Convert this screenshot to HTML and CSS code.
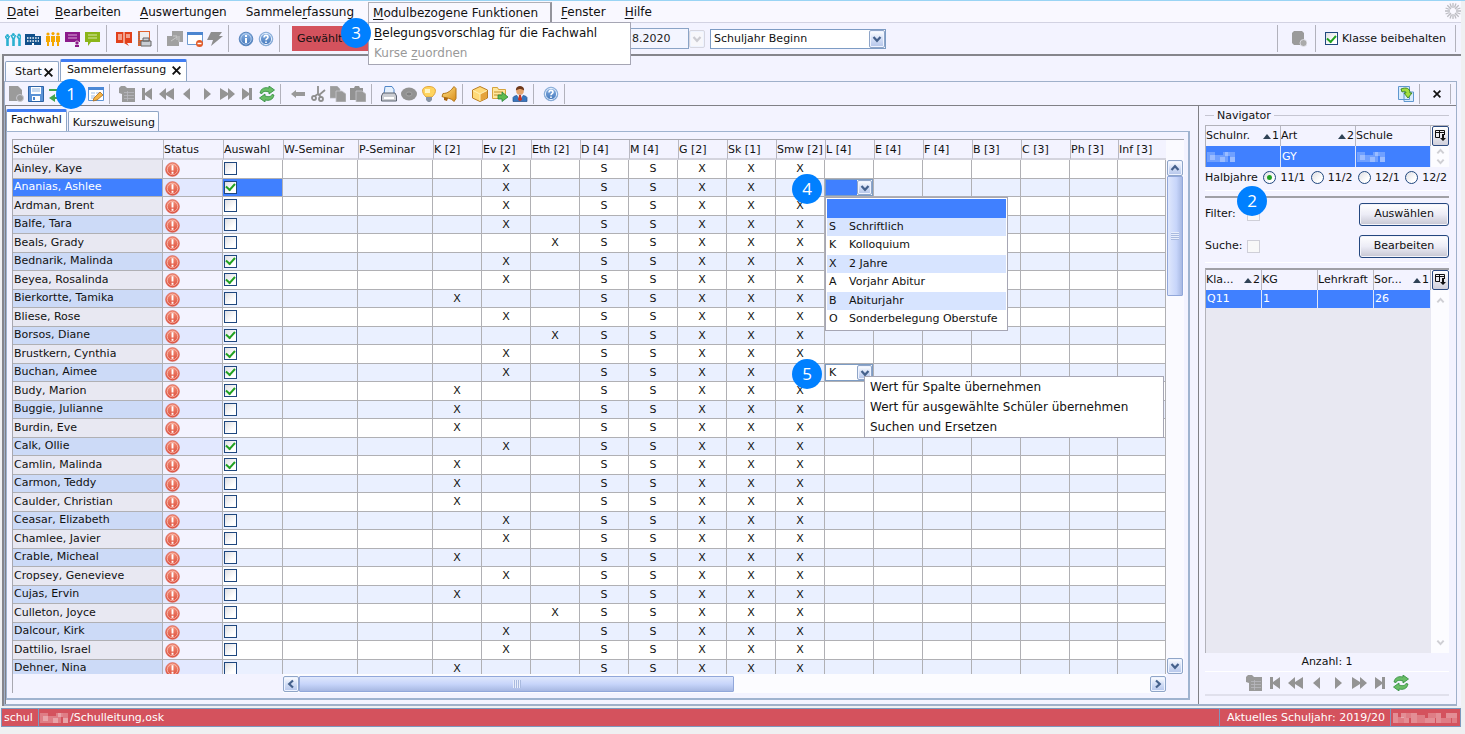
FILE: index.html
```html
<!DOCTYPE html>
<html lang="de">
<head>
<meta charset="utf-8">
<title>Sammelerfassung</title>
<link rel="stylesheet" href="styles.css">
</head>
<body>
<svg class="defs" aria-hidden="true">
  <linearGradient id="g-red" x2="0" y2="1"><stop stop-color="#f3937c"/><stop offset="1" stop-color="#dc4a38"/></linearGradient>
  <linearGradient id="g-blue" x2="0" y2="1"><stop stop-color="#8fb6e6"/><stop offset="1" stop-color="#3d72b8"/></linearGradient>
  <linearGradient id="g-gold" x2="1" y2="1"><stop stop-color="#ffe48a"/><stop offset="1" stop-color="#d98b18"/></linearGradient>
  <symbol id="people" viewBox="0 0 16 16"><g fill="none" stroke="#2bb0d0" stroke-width="1.600"><path d="M0 5l2 3v7M4.500 5L3 8v7M6 4l2 4v7M10.500 4L9 8v7M12 5l2 3v7M16 4l-1 4v7"/></g><g fill="#2bb0d0"><circle cx="2.500" cy="4.500" r="1.500"/><circle cx="8.300" cy="3.500" r="1.500"/><circle cx="14" cy="4" r="1.500"/></g></symbol>
  <symbol id="school" viewBox="0 0 16 16"><path fill="#12508b" d="M0 3h10v2h6v9H0z"/><path stroke="#fff" stroke-width="1.300" stroke-dasharray="1.500 1.200" d="M2 7h12M2 10h12"/><path fill="#fff" d="M7 12h2v2H7z"/></symbol>
  <symbol id="staff" viewBox="0 0 16 16"><g fill="#f5a800"><circle cx="3" cy="3" r="1.600"/><circle cx="8" cy="2.600" r="1.600"/><circle cx="13" cy="3" r="1.600"/><path d="M1 5h4v6H4v4H2v-4H1zM6 5h4v6H9v4H7v-4H6zM11 5h4v6h-1v4h-2v-4h-1z"/></g></symbol>
  <symbol id="board" viewBox="0 0 16 16"><path fill="#8b1a8b" d="M0 1h15v10H0z"/><path stroke="#d8a8d8" d="M3 4h9M3 7h9"/><circle cx="12" cy="12" r="2" fill="#8b1a8b" stroke="#fff" stroke-width=".6"/><path fill="#8b1a8b" d="M10 14h4v2h-4z"/></symbol>
  <symbol id="chat" viewBox="0 0 16 16"><path fill="#8bb51a" d="M0 1h15v10H6l-3 4v-4H0z"/><path stroke="#d8e8a8" d="M3 4h9M3 7h9"/></symbol>
  <symbol id="book" viewBox="0 0 16 16"><path fill="#e2401b" d="M0 1h7l1 1 1-1h7v11h-5l2 3-5-3H0z"/><path stroke="#fff" d="M2 4h4M2 6h4M2 8h4M10 4h4M10 6h4M8 2v10"/></symbol>
  <symbol id="notebook" viewBox="0 0 16 16"><path fill="#df632e" d="M2 0h12v15H2z"/><path fill="#eee" d="M4 1h9v8H4z"/><path stroke="#777" stroke-dasharray="1 1" d="M3 1v14"/><path fill="#c9cdd4" stroke="#666" d="M5 10h10v5H5zM7 7h6v3H7z"/></symbol>
  <symbol id="stack" viewBox="0 0 16 16"><path fill="#a1a1a1" d="M0 5h5V0h11v11h-4v4H0z"/><path stroke="#c8c8c8" fill="none" d="M4 10l6-4M6 5h4v4M12 11V5"/></symbol>
  <symbol id="winred" viewBox="0 0 16 16"><path fill="#fff" stroke="#6d9bd1" d="M.5 1.500h15v12H.5z"/><path fill="#4b85d0" d="M0 1h16v3H0z"/><circle cx="12.500" cy="12.500" r="3.500" fill="#e35a26"/><path stroke="#fff" stroke-width="1.500" d="M10.500 12.500h4"/></symbol>
  <symbol id="bolt" viewBox="0 0 16 16"><path fill="#8e8e8e" d="M4 1h11l-3 4h4L4 15l2-6H0z"/></symbol>
  <symbol id="info" viewBox="0 0 16 16"><circle cx="8" cy="8" r="6.800" fill="url(#g-blue)" stroke="#5b87be"/><circle cx="8" cy="8" r="5.200" fill="none" stroke="#cfe0f6" stroke-width=".7"/><path fill="#fff" d="M7 4h2v2H7zM7 7h2v5H7z"/></symbol>
  <symbol id="help" viewBox="0 0 16 16"><circle cx="8" cy="8" r="6.800" fill="url(#g-blue)" stroke="#8baed8"/><circle cx="8" cy="8" r="5.600" fill="none" stroke="#e5effc"/><path fill="none" stroke="#fff" stroke-width="1.600" d="M6 6.500c0-3 4-2.500 4-.3C10 7.600 8 7.600 8 9.300M8 10.500v1.500"/></symbol>
  <symbol id="dbgray" viewBox="0 0 16 16"><path fill="#9b9b9b" d="M1 2l2-2h8l2 2v8l-2 4H3l-2-2z"/><circle cx="12.500" cy="12" r="3.500" fill="#aaa" stroke="#ededf5" stroke-width=".7"/></symbol>
  <symbol id="docgray" viewBox="0 0 16 16"><path fill="#9b9b9b" d="M1 0h9l4 4v11H1z"/><circle cx="12" cy="12" r="3.500" fill="#999" stroke="#c9c9d0"/></symbol>
  <symbol id="save" viewBox="0 0 16 16"><path fill="#5b93d6" stroke="#2c62a5" d="M.5.5h15v15H.5z"/><path fill="#fff" d="M3 1h10v7H3zM4 10h8v5H4z"/><path stroke="#8db2df" d="M4 3h8M4 5h8"/><path fill="#4a86cc" d="M5 11h2v3H5z"/></symbol>
  <symbol id="swap" viewBox="0 0 16 16"><path fill="#42a64c" d="M1 3h9V0l6 4-6 4V5H1zM15 11H7V8l-6 4 6 4v-3h8z"/></symbol>
  <symbol id="edit" viewBox="0 0 16 16"><path fill="#fff" stroke="#5d95d6" d="M.5 1.500h15v13H.5z"/><path fill="#4b88d6" d="M0 1h16v3H0z"/><path stroke="#9dbde5" d="M3 7h4M8 7h5M3 10h4M3 12h3"/><path fill="#f5b544" stroke="#a9691d" stroke-width=".8" d="M6 12l6-6 3 3-6 5-4 1z"/></symbol>
  <symbol id="table" viewBox="0 0 16 16"><path fill="#9a9a9a" d="M0 2l2-2h4l2 2h8v14H3V8L0 7z"/><path stroke="#b9b9bf" stroke-width=".8" fill="none" d="M5 6.500h10M5 9.500h10M5 12.500h10M8.500 5v10"/></symbol>
  <symbol id="first" viewBox="0 0 16 16"><path fill="#949494" d="M3 2h3v5l7-5v12L6 9v5H3z"/></symbol>
  <symbol id="last" viewBox="0 0 16 16"><path fill="#949494" d="M13 2h-3v5L3 2v12l7-5v5h3z"/></symbol>
  <symbol id="rew" viewBox="0 0 16 16"><path fill="#949494" d="M0 8l7-6v5l8-5v12L7 9v5z"/></symbol>
  <symbol id="fwd" viewBox="0 0 16 16"><path fill="#949494" d="M16 8L9 2v5L1 2v12l8-5v5z"/></symbol>
  <symbol id="prev" viewBox="0 0 16 16"><path fill="#949494" d="M4 8l7-6v12z"/></symbol>
  <symbol id="next" viewBox="0 0 16 16"><path fill="#949494" d="M12 8L5 2v12z"/></symbol>
  <symbol id="refresh" viewBox="0 0 16 16"><g fill="#69bd67" stroke="#2f8a3c" stroke-width=".8"><path d="M1 7c1-5 5-6 9-5V0l5.500 4L10 8V6C7 5 4 5 3 7.500z"/><path d="M15 9c-1 5-5 6-9 5v2L.500 12 6 8v2c3 1 6 1 7-1.500z"/></g></symbol>
  <symbol id="back" viewBox="0 0 16 16"><path fill="#999" d="M1 8l5-4v2h9v4H6v2z"/></symbol>
  <symbol id="cut" viewBox="0 0 16 16"><g fill="none" stroke="#8f8f8f" stroke-width="1.800"><path d="M8 0v8l-3 2M15 4L9 9l2 2"/><circle cx="4" cy="12" r="2"/><circle cx="11" cy="13" r="2"/></g></symbol>
  <symbol id="copy" viewBox="0 0 16 16"><path fill="#9c9c9c" stroke="#b9b9be" stroke-width=".7" d="M0 0h7l3 3v9H0z"/><path fill="#999" stroke="#c6c6cc" stroke-width=".8" d="M6 5h6l4 3v8H6z"/></symbol>
  <symbol id="paste" viewBox="0 0 16 16"><path fill="#929292" d="M0 2h4l1-2h4l1 2h3v12H0z"/><path fill="#999" stroke="#c6c6cc" stroke-width=".8" d="M6 5h6l4 3v8H6z"/></symbol>
  <symbol id="print" viewBox="0 0 16 16"><path fill="#e6f0fc" stroke="#5186c8" d="M4 .5h7l2 3V8H3z"/><path fill="#cbcdd2" stroke="#5b6270" d="M2 7h12l1.500 3v5H.5v-5z"/><path fill="#fff" d="M3 11h10v2H3z"/></symbol>
  <symbol id="disc" viewBox="0 0 16 16"><ellipse cx="8" cy="8" rx="8" ry="6.500" fill="#929292"/><ellipse cx="8" cy="8" rx="3" ry="2" fill="#808080" stroke="#a5a5a5"/></symbol>
  <symbol id="bulb" viewBox="0 0 16 16"><path fill="#ffd45e" stroke="#e2a63b" d="M8 .5c8 0 8 6 3 10.500H5C0 6.500 0 .5 8 .5z"/><path fill="#fff4c4" d="M4 3h5v4H4z"/><path fill="#8995a5" d="M5 11h6v3l-2 2H7l-2-2z"/></symbol>
  <symbol id="bell" viewBox="0 0 16 16"><path fill="url(#g-gold)" stroke="#b27415" d="M13 .5l2 2v10l-2 3c-3-4-8-3-12-5l1-3c5 0 8-3 11-7z"/><path fill="#a8640f" d="M3 11l4 1-1 3-3-1z"/></symbol>
  <symbol id="box" viewBox="0 0 16 16"><path fill="#ffda79" stroke="#b97c22" d="M8 .5L15.500 4v8L8 15.500.500 12V4z"/><path fill="#e5a33a" d="M8 8l7-3.500V12l-7 3z"/><path fill="none" stroke="#fff1b5" d="M1 4.500L8 8l7-3.500M8 8v7"/></symbol>
  <symbol id="folder" viewBox="0 0 16 16"><path fill="#ffe79d" stroke="#d5a33c" d="M.5 1.500h5l1 2h7v9H.5z"/><path stroke="#c18e2a" d="M2 6h9M2 9h7"/><path fill="#5dbb4d" stroke="#26833a" stroke-width=".8" d="M6 9h4V6l6 5-6 4.500V13H6z"/></symbol>
  <symbol id="user" viewBox="0 0 16 16"><circle cx="8" cy="5" r="3.800" fill="#e5a36c"/><path fill="#70391b" d="M4 4.500c-1-6 9-6 8 0-3-2-5-2-8 0z"/><path fill="#3877bf" stroke="#24508b" stroke-width=".7" d="M1 15.500v-4c1-3 13-3 14 0v4z"/><path fill="#fff" d="M5 9h6l-3 5z"/><path fill="#c83424" d="M7 9h2l1 5-2 1-2-1z"/></symbol>
  <symbol id="undock" viewBox="0 0 16 16"><path fill="#d9ebfb" stroke="#5f97cf" d="M.5.5h11v13H.5zM6 6h9.500v9.500H6z"/><path fill="#a4df3f" stroke="#38821c" stroke-width=".9" d="M3 3c5-2 9-1 9 4h2l-4 5-4-5h2c0-2-2-2-4-1z"/></symbol>
  <symbol id="alert" viewBox="0 0 16 16"><circle cx="8" cy="8" r="7.300" fill="url(#g-red)" stroke="#d95745" stroke-width=".8"/><circle cx="8" cy="8" r="5.600" fill="none" stroke="#f9c4b9" stroke-width=".8"/><path fill="#fff" d="M7 3.500h2V9H7zM7 10.500h2v2H7z"/></symbol>
  <symbol id="down" viewBox="0 0 10 10"><path fill="none" stroke="currentColor" stroke-width="2.200" d="M1.500 3L5 6.800 8.500 3"/></symbol>
  <symbol id="up" viewBox="0 0 10 10"><path fill="none" stroke="currentColor" stroke-width="2.200" d="M1.500 7L5 3.200 8.500 7"/></symbol>
  <symbol id="left" viewBox="0 0 10 10"><path fill="none" stroke="currentColor" stroke-width="2.200" d="M7 1.500L3.200 5 7 8.500"/></symbol>
  <symbol id="right" viewBox="0 0 10 10"><path fill="none" stroke="currentColor" stroke-width="2.200" d="M3 1.500L6.800 5 3 8.500"/></symbol>
  <symbol id="close" viewBox="0 0 8 8"><path stroke="#111" stroke-width="1.700" d="M.6.6l6.800 6.800M7.400.6L.6 7.400"/></symbol>
  <symbol id="sort" viewBox="0 0 8 5"><path fill="#2f4256" d="M4 0l4 5H0z"/></symbol>
  <symbol id="cols" viewBox="0 0 11 12"><path fill="none" stroke="#111" d="M5 7.500H.5v-7h9V5M.5 2.500h9M4.500.5v7"/><path fill="#111" d="M7 4h2v4h2l-3 3-3-3h2z"/></symbol>
  <symbol id="spin" viewBox="0 0 16 16"><g stroke="#bcbcc2" stroke-width="1.300"><path d="M8 0v5M8 11v5M0 8h5M11 8h5M2.300 2.300L6 6M10 10l3.700 3.700M2.300 13.700L6 10M10 6l3.700-3.700M5 .6l1.500 4M9.500 11.400l1.500 4M11 .6L9.500 4.600M6.500 11.400L5 15.400M.6 5l4 1.500M11.400 9.500l4 1.500M.6 11l4-1.500M11.400 6.500l4-1.500"/></g></symbol>
  <symbol id="pixels" viewBox="0 0 30 10" preserveAspectRatio="none"><path fill="#fff" fill-opacity=".25" d="M0 0h8v10H0zM8 3h8v7H8zM16 0h5v10h-5zM23 0h5v10h-5z"/><path fill="#fff" fill-opacity=".3" d="M3 3h5v5H3zM13 5h5v5h-5zM18 0h5v4h-5zM23 5h5v5h-5z"/></symbol>
  <symbol id="pixels-wide" viewBox="0 0 64 10"><path fill="#fff" fill-opacity=".35" d="M0 0h5v10H0zM8 0h5v5H8zM11 5h5v5h-5zM18 0h6v10h-6zM32 5h10v5H32zM43 0h5v10h-5zM53 0h11v5H53z"/><path fill="#fff" fill-opacity=".25" d="M5 4h6v6H5zM13 0h5v5h-5zM24 2h8v8h-8zM35 0h8v5h-8zM48 5h10v5H48zM59 5h5v5h-5z"/></symbol>
</svg>

<div class="window">
  <nav class="menubar" aria-label="Hauptmenü">
    <button class="first"><u>D</u>atei</button>
    <button><u>B</u>earbeiten</button>
    <button><u>A</u>uswertungen</button>
    <button>Sammele<u>r</u>fassung</button>
    <div class="menu-open">
      <button class="active"><u>M</u>odulbezogene Funktionen</button>
      <div class="popup main-popup" role="menu">
        <button role="menuitem"><u>B</u>elegungsvorschlag für die Fachwahl</button>
        <button role="menuitem" disabled>Kurse <u>z</u>uordnen</button>
        <span class="badge badge-3">3</span>
      </div>
    </div>
    <button><u>F</u>enster</button>
    <button><u>H</u>ilfe</button>
    <svg class="spinner"><use href="#spin"/></svg>
  </nav>

  <div class="toolbar top-tools">
    <button class="tool" aria-label="Schüler"><svg><use href="#people"/></svg></button>
    <button class="tool" aria-label="Schule"><svg><use href="#school"/></svg></button>
    <button class="tool" aria-label="Lehrer"><svg><use href="#staff"/></svg></button>
    <button class="tool" aria-label="Unterricht"><svg><use href="#board"/></svg></button>
    <button class="tool" aria-label="Nachrichten"><svg><use href="#chat"/></svg></button>
    <i class="sep"></i>
    <button class="tool" aria-label="Klassen"><svg><use href="#book"/></svg></button>
    <button class="tool" aria-label="Berichte"><svg><use href="#notebook"/></svg></button>
    <i class="sep"></i>
    <button class="tool" aria-label="Fenster anordnen"><svg><use href="#stack"/></svg></button>
    <button class="tool" aria-label="Fenster schließen"><svg><use href="#winred"/></svg></button>
    <button class="tool" aria-label="Ausführen"><svg><use href="#bolt"/></svg></button>
    <i class="sep"></i>
    <button class="tool" aria-label="Info"><svg><use href="#info"/></svg></button>
    <button class="tool" aria-label="Hilfe"><svg><use href="#help"/></svg></button>
    <i class="sep"></i>
    <label class="year-label" for="datum">Gewählte</label>
    <input class="date" id="datum" value="8.2020">
    <span class="arrow off"><svg><use href="#down"/></svg></span>
    <span class="combo year"><select aria-label="Zeitpunkt"><option>Schuljahr Beginn</option></select><span class="arrow"><svg><use href="#down"/></svg></span></span>
    <span class="grow"></span>
    <i class="sep"></i>
    <button class="tool db" aria-label="Datenbank"><svg><use href="#dbgray"/></svg></button>
    <i class="sep"></i>
    <label class="keep"><input type="checkbox" class="check" checked>Klasse beibehalten</label>
    <i class="sep end"></i>
  </div>

  <main class="workspace">
    <div class="tabs">
      <button class="tab">Start<svg><use href="#close"/></svg></button>
      <button class="tab on">Sammelerfassung<svg><use href="#close"/></svg></button>
    </div>
    <div class="module">
      <div class="toolbar module-tools">
        <button class="tool" aria-label="Neu"><svg><use href="#docgray"/></svg></button>
        <button class="tool" aria-label="Speichern"><svg><use href="#save"/></svg></button>
        <button class="tool" aria-label="Tauschen"><svg><use href="#swap"/></svg></button>
        <button class="tool" aria-label="Filter"></button>
        <button class="tool" aria-label="Bearbeiten"><svg><use href="#edit"/></svg></button>
        <span class="badge badge-1">1</span>
        <i class="sep"></i>
        <button class="tool" aria-label="Tabelle"><svg><use href="#table"/></svg></button>
        <button class="tool" aria-label="Erster"><svg><use href="#first"/></svg></button>
        <button class="tool" aria-label="Zurückspulen"><svg><use href="#rew"/></svg></button>
        <button class="tool" aria-label="Vorheriger"><svg><use href="#prev"/></svg></button>
        <button class="tool" aria-label="Nächster"><svg><use href="#next"/></svg></button>
        <button class="tool" aria-label="Vorspulen"><svg><use href="#fwd"/></svg></button>
        <button class="tool" aria-label="Letzter"><svg><use href="#last"/></svg></button>
        <button class="tool" aria-label="Aktualisieren"><svg><use href="#refresh"/></svg></button>
        <i class="sep"></i>
        <button class="tool" aria-label="Rückgängig"><svg><use href="#back"/></svg></button>
        <button class="tool" aria-label="Ausschneiden"><svg><use href="#cut"/></svg></button>
        <button class="tool" aria-label="Kopieren"><svg><use href="#copy"/></svg></button>
        <button class="tool" aria-label="Einfügen"><svg><use href="#paste"/></svg></button>
        <i class="sep"></i>
        <button class="tool" aria-label="Drucken"><svg><use href="#print"/></svg></button>
        <button class="tool" aria-label="Vorschau"><svg><use href="#disc"/></svg></button>
        <button class="tool" aria-label="Tipp"><svg><use href="#bulb"/></svg></button>
        <button class="tool" aria-label="Erinnerung"><svg><use href="#bell"/></svg></button>
        <i class="sep"></i>
        <button class="tool" aria-label="Paket"><svg><use href="#box"/></svg></button>
        <button class="tool" aria-label="Export"><svg><use href="#folder"/></svg></button>
        <button class="tool" aria-label="Benutzer"><svg><use href="#user"/></svg></button>
        <i class="sep"></i>
        <button class="tool" aria-label="Modulhilfe"><svg><use href="#help"/></svg></button>
        <i class="sep"></i>
        <span class="grow"></span>
        <button class="tool" aria-label="Abdocken"><svg><use href="#undock"/></svg></button>
        <i class="sep"></i>
        <button class="tool small" aria-label="Schließen"><svg><use href="#close"/></svg></button>
        <i class="sep end"></i>
      </div>

      <div class="split">
        <section class="left">
          <div class="tabs inner">
            <button class="tab on">Fachwahl</button>
            <button class="tab">Kurszuweisung</button>
          </div>
          <div class="panel">
            <div class="grid-frame">
              <div class="grid-view">
                <table class="grid">
                  <colgroup><col class="c-name"><col class="c-mid"><col class="c-mid"><col class="c-sem"><col class="c-sem"><col class="c-sub" span="13"><col></colgroup>
                  <thead><tr><th>Schüler</th><th>Status</th><th>Auswahl</th><th>W-Seminar</th><th>P-Seminar</th><th>K [2]</th><th>Ev [2]</th><th>Eth [2]</th><th>D [4]</th><th>M [4]</th><th>G [2]</th><th>Sk [1]</th><th>Smw [2]</th><th>L [4]</th><th>E [4]</th><th>F [4]</th><th>B [3]</th><th>C [3]</th><th>Ph [3]</th><th>Inf [3]</th></tr></thead>
                  <tbody id="rows"></tbody>
                </table>
              </div>
              <div class="vscroll">
                <span class="arrow"><svg><use href="#up"/></svg></span>
                <span class="thumb v"><i class="grip"></i></span>
                <span class="grow"></span>
                <span class="arrow"><svg><use href="#down"/></svg></span>
              </div>
              <div class="hscroll">
                <span class="arrow"><svg><use href="#left"/></svg></span>
                <span class="thumb h"><i class="grip"></i></span>
                <span class="grow"></span>
                <span class="arrow"><svg><use href="#right"/></svg></span>
              </div>
            </div>
          </div>
        </section>

        <aside class="right">
          <h2 class="group-title">Navigator</h2>
          <div class="nav-frame">
            <table class="nav-table">
              <thead><tr><th><span class="head">Schulnr.<span class="order"><svg><use href="#sort"/></svg>1</span></span></th><th><span class="head">Art<span class="order"><svg><use href="#sort"/></svg>2</span></span></th><th>Schule</th></tr></thead>
              <tbody><tr><td><svg class="pixelated"><use href="#pixels"/></svg></td><td>GY</td><td><svg class="pixelated"><use href="#pixels"/></svg></td></tr></tbody>
            </table>
            <div class="nav-side">
              <button class="cols" aria-label="Spalten"><svg><use href="#cols"/></svg></button>
              <div class="ghost"><svg><use href="#up"/></svg><svg><use href="#down"/></svg></div>
            </div>
          </div>
          <div class="radios">
            <span>Halbjahre</span>
            <label><input type="radio" name="hj" checked>11/1</label>
            <label><input type="radio" name="hj">11/2</label>
            <label><input type="radio" name="hj">12/1</label>
            <label><input type="radio" name="hj">12/2</label>
          </div>
          <div class="filters">
            <div class="filter-row">
              <label for="filter">Filter:</label><input id="filter" type="checkbox" class="check off">
              <button class="push">Auswählen</button>
              <span class="badge badge-2">2</span>
            </div>
            <div class="filter-row">
              <label for="suche">Suche:</label><input id="suche" type="checkbox" class="check off">
              <button class="push">Bearbeiten</button>
            </div>
          </div>
          <div class="nav-frame tall">
            <div class="nav-fill">
              <table class="nav-table">
                <colgroup><col class="n-col"><col class="n-col"><col class="n-col"><col></colgroup>
                <thead><tr><th><span class="head">Kla...<span class="order"><svg><use href="#sort"/></svg>2</span></span></th><th>KG</th><th>Lehrkraft</th><th><span class="head">Sor...<span class="order"><svg><use href="#sort"/></svg>1</span></span></th></tr></thead>
                <tbody><tr><td>Q11</td><td>1</td><td></td><td>26</td></tr></tbody>
              </table>
            </div>
            <div class="nav-side">
              <button class="cols" aria-label="Spalten"><svg><use href="#cols"/></svg></button>
              <div class="ghost"><svg><use href="#up"/></svg><svg><use href="#down"/></svg></div>
            </div>
          </div>
          <p class="count">Anzahl: 1</p>
          <div class="pager">
            <button class="tool" aria-label="Tabelle"><svg><use href="#table"/></svg></button>
            <button class="tool" aria-label="Erster"><svg><use href="#first"/></svg></button>
            <button class="tool" aria-label="Zurückspulen"><svg><use href="#rew"/></svg></button>
            <button class="tool" aria-label="Vorheriger"><svg><use href="#prev"/></svg></button>
            <button class="tool" aria-label="Nächster"><svg><use href="#next"/></svg></button>
            <button class="tool" aria-label="Vorspulen"><svg><use href="#fwd"/></svg></button>
            <button class="tool" aria-label="Letzter"><svg><use href="#last"/></svg></button>
            <button class="tool" aria-label="Aktualisieren"><svg><use href="#refresh"/></svg></button>
          </div>
        </aside>
      </div>
    </div>
  </main>

  <footer class="statusbar">
    <span class="host">schul</span>
    <span class="path"><svg class="pixelated"><use href="#pixels"/></svg>/Schulleitung,osk</span>
    <span class="schoolyear">Aktuelles Schuljahr: 2019/20</span>
    <span><svg class="pixelated wide"><use href="#pixels-wide"/></svg></span>
  </footer>
</div>
<script src="app.js"></script>
</body>
</html>
```
FILE: app.js
```js
// name | selected for batch action | religion column (K, Ev, Eth)
const students = [
  ["Ainley, Kaye", 0, "Ev"], ["Ananias, Ashlee", 1, "Ev"], ["Ardman, Brent", 0, "Ev"],
  ["Balfe, Tara", 0, "Ev"], ["Beals, Grady", 0, "Eth"], ["Bednarik, Malinda", 1, "Ev"],
  ["Beyea, Rosalinda", 1, "Ev"], ["Bierkortte, Tamika", 0, "K"], ["Bliese, Rose", 0, "Ev"],
  ["Borsos, Diane", 1, "Eth"], ["Brustkern, Cynthia", 1, "Ev"], ["Buchan, Aimee", 1, "Ev"],
  ["Budy, Marion", 1, "K"], ["Buggie, Julianne", 0, "K"], ["Burdin, Eve", 0, "K"],
  ["Calk, Ollie", 1, "Ev"], ["Camlin, Malinda", 1, "K"], ["Carmon, Teddy", 0, "K"],
  ["Caulder, Christian", 0, "K"], ["Ceasar, Elizabeth", 0, "Ev"], ["Chamlee, Javier", 0, "Ev"],
  ["Crable, Micheal", 0, "K"], ["Cropsey, Genevieve", 0, "Ev"], ["Cujas, Ervin", 0, "K"],
  ["Culleton, Joyce", 0, "Eth"], ["Dalcour, Kirk", 0, "Ev"], ["Dattilio, Israel", 0, "Ev"],
  ["Dehner, Nina", 0, "K"]
];
const columns = ["W", "P", "K", "Ev", "Eth", "D", "M", "G", "Sk", "Smw", "L", "E", "F", "B", "C", "Ph", "Inf"];
const values = { D: "S", M: "S", G: "X", Sk: "X", Smw: "X" };
const choices = [["", ""], ["S", "Schriftlich"], ["K", "Kolloquium"], ["X", "2 Jahre"],
  ["A", "Vorjahr Abitur"], ["B", "Abiturjahr"], ["O", "Sonderbelegung Oberstufe"]];

const combo = (value, cls) =>
  `<span class="combo cell ${cls}"><select aria-label="L"><option>${value}</option></select>` +
  `<span class="arrow"><svg><use href="#down"/></svg></span></span>`;

const choiceList = `<ul class="choices" role="listbox">` +
  choices.map(([k, t]) => `<li role="option"><span>${k}</span>${t}</li>`).join("") + `</ul>`;

const contextMenu = `<div class="popup context" role="menu">` +
  ["Wert für Spalte übernehmen", "Wert für ausgewählte Schüler übernehmen", "Suchen und Ersetzen"]
    .map(t => `<button role="menuitem">${t}</button>`).join("") + `</div>`;

const special = {
  "Ananias, Ashlee": combo("", "open") + choiceList + `<span class="badge badge-cell">4</span>`,
  "Buchan, Aimee": combo("K", "") + contextMenu + `<span class="badge badge-cell">5</span>`
};

document.getElementById("rows").innerHTML = students.map(([name, checked, faith], i) => {
  const cells = columns.map(c => {
    if (c === "L" && special[name]) return `<td class="anchor">${special[name]}</td>`;
    return `<td>${values[c] || (c === faith ? "X" : "")}</td>`;
  }).join("");
  return `<tr class="${i === 1 ? "selected" : ""}"><th scope="row">${name}</th>` +
    `<td class="status"><svg><use href="#alert"/></svg></td>` +
    `<td class="pick"><input type="checkbox" class="check" aria-label="${name}" ${checked ? "checked" : ""}></td>${cells}</tr>`;
}).join("");
```
FILE: styles.css
```css
* { box-sizing: border-box; }
html, body { height: 100%; }
body { margin: 0; background: #eff0f2; font: 11px/16px "DejaVu Sans", sans-serif; color: #111; overflow: hidden; }
button, input, select { font: inherit; color: inherit; margin: 0; }
button { background: none; border: 0; padding: 0; }
svg { display: block; flex: none; }
.defs { position: absolute; width: 0; height: 0; }
.grow { flex: 1; }

.window { display: flex; flex-direction: column; height: 100%; border-top: 1px solid #9ad4f4; padding: 0 4px 7px 0; }

.menubar { display: flex; align-items: stretch; height: 22px; flex: none; background: #f9f8ff; border-bottom: 1px solid #d2d2e2; font-size: 12px; line-height: 18px; padding: 1px 0 0 2px; }
.menubar > button { padding: 0 8px 0 5px; margin-right: 6px; }
.menubar > .first { margin-right: 3px; }
.menubar u { text-underline-offset: 2px; }
.menu-open { position: relative; margin-right: 4px; }
.menu-open > .active { height: 20px; padding: 0 12px 0 4px; border: 1px solid #b0b0b8; border-bottom: 0; border-right: 2px solid #94949c; }
.spinner { width: 16px; height: 16px; margin: 1px 0 0 auto; }

.popup { position: absolute; z-index: 5; background: #fff; border: 1px solid #a6a6b4; display: flex; flex-direction: column; align-items: stretch; font-size: 12px; white-space: nowrap; }
.popup button { text-align: left; padding: 0 5px; height: 20px; line-height: 20px; }
.popup button:disabled { color: #999; }
.main-popup { top: 20px; left: 0; width: 263px; padding-bottom: 1px; }

.badge { position: absolute; z-index: 9; width: 30px; height: 30px; border-radius: 15px; background: #0080ff; color: #fff; font: 17px/30px "Open Sans", sans-serif; text-align: center; }
.badge-3 { left: -28px; top: -5px; }
.badge-1 { left: 51px; top: -3px; }
.badge-2 { left: 32px; top: -16px; }
.badge-cell { left: -33px; top: -5px; }

.toolbar { display: flex; align-items: center; flex: none; position: relative; }
.top-tools { height: 31px; padding: 0 3px; background: #f3f3ff; }
.module-tools { height: 24px; padding: 0 0 0 1px; border-bottom: 1px solid #808086; }
.tool { width: 20px; height: 22px; display: flex; align-items: center; justify-content: center; }
.tool svg { width: 16px; height: 16px; }
.tool.small svg { width: 8px; height: 8px; }
.tool.db { margin: 0 3px 0 4px; }
.sep { width: 1px; height: 27px; margin: 0 7px 0 3px; background: #b2b2bc; flex: none; }
.module-tools .sep { height: 20px; }
.sep.end { margin-right: 2px; }
.module-tools .sep.end { margin-right: 5px; }
.year-label { margin-left: 5px; width: 305px; height: 25px; line-height: 25px; padding-left: 5px; background: #d4525d; }
.date { width: 92px; height: 21px; border: 1px solid #8ba4c6; background: #f3f5ff; padding: 0 0 0 34px; color: #222; }
.arrow { width: 16px; height: 18px; display: flex; align-items: center; justify-content: center; flex: none; color: #45618c; border: 1px solid #8fa5c8; border-radius: 2px; background: linear-gradient(#fff, #d3def6 50%, #b4c5ea); box-shadow: inset 0 0 0 1px #eef3ff; }
.arrow svg { width: 10px; height: 10px; }
.arrow.off { color: #ccccd2; border-color: #d6d6e0; background: #f7f7fb; }
.combo { display: flex; border: 1px solid #7d9cc4; background: #fff; }
.combo select { appearance: none; border: 0; background: transparent; padding: 0 3px; flex: 1; min-width: 0; border-radius: 0; }
.combo.year { margin-left: 5px; width: 176px; height: 20px; }
.keep { display: flex; align-items: center; gap: 4px; padding: 0 6px 0 2px; }

.check { appearance: none; width: 13px; height: 13px; border: 1px solid #1f477e; background: linear-gradient(135deg, #dedee2, #fff 70%); display: grid; place-items: center; flex: none; }
.check:checked::after { content: ""; width: 7px; height: 4px; border: solid #21a121; border-width: 0 0 2px 2px; transform: rotate(-48deg); margin-top: -2px; }
.check.off { border-color: #cfcfd8; background: #f8f8f8; }

.workspace { flex: 1; min-height: 0; display: flex; flex-direction: column; margin: 0 0 2px 2px; border: solid #85858c; border-width: 2px 0 0 2px; background: #f3f3ff; }
.tabs { display: flex; align-items: flex-end; height: 25px; flex: none; padding: 0 1px; gap: 1px; }
.tab { display: flex; align-items: center; gap: 2px; height: 20px; padding: 1px 5px 0 9px; border: 1px solid #8ea5c5; border-bottom: 0; border-radius: 2px 2px 0 0; background: linear-gradient(#fff, #f3f3ff); }
.tab svg { width: 9px; height: 9px; }
.tab.on { gap: 6px; height: 22px; border-top: 3px solid #3f7cf2; background: #fff; padding: 0 5px 3px 6px; }
.module { flex: 1; min-height: 0; display: flex; flex-direction: column; margin-right: 4px; border: solid #9fb0ca; border-width: 1px 1px 2px 1px; }
.split { flex: 1; min-height: 0; display: flex; gap: 5px; }
.left { flex: 1; min-width: 0; display: flex; flex-direction: column; border-left: 1px solid #808086; padding: 0 3px 4px 0; }
.inner.tabs { height: 25px; padding: 0; gap: 1px; }
.inner .tab { padding: 2px 3px 0 4px; }
.inner .tab.on { padding: 0 4px 3px 4px; }
.panel { flex: 1; min-height: 0; border: solid #9fb3cf; border-width: 1px 2px 2px 1px; padding: 7px 4px 5px 5px; display: flex; }
.grid-frame { flex: 1; min-width: 0; display: grid; grid-template: minmax(0, 1fr) 19px / 270px minmax(0, 1fr) 18px; border: solid #a8a8b0; border-width: 1px 0 0 1px; }
.grid-view { grid-column: 1 / 3; position: relative; overflow: hidden; }

.grid { table-layout: fixed; width: 100%; border-collapse: separate; border-spacing: 0; }
.c-name { width: 150px; }
.c-mid { width: 60px; }
.c-sem { width: 75px; }
.c-sub { width: 49px; }
.grid th, .grid td { padding: 0; font-weight: normal; white-space: nowrap; line-height: 16px; }
.grid thead th { height: 20px; text-align: left; padding: 2px 0 0; border-bottom: 2px solid #d4d4de; background: #f3f3ff; }
.grid thead th + th { border-left: 1px solid #b8b8c2; }
.grid tbody tr { height: 19px; background: #fff; }
.grid tbody tr:nth-child(even) { height: 18px; background: #eaf0ff; }
.grid tbody th { text-align: left; padding: 0 0 1px 1px; background: #e8e8f2; border: solid #b0b0b4; border-width: 0 1px 1px 0; overflow: hidden; }
.grid tbody tr:nth-child(even) th { background: #ccdaf7; }
.grid tbody td { text-align: center; border: solid #b0b0b4; border-width: 0 1px 1px 0; }
.grid tbody .status { background: #f3f3ff; }
.grid tbody tr:nth-child(even) .status { background: #e2e8ff; }
.status svg { width: 15px; height: 15px; margin: 1px 0 0 2px; }
.pick .check { margin: 0 0 1px 1px; }
.grid tbody tr.selected:nth-child(even) th, .grid tbody .selected .pick { background: #4080ff; }
.grid tbody .selected th { color: #fff; }
.anchor { position: relative; }
.combo.cell { height: 17px; width: 48px; }
.combo.cell .arrow { height: 15px; width: 15px; }
.combo.cell.open select { background: #4080ff; }
.choices { position: absolute; z-index: 6; left: 0; top: 18px; width: 183px; margin: 0; padding: 1px; list-style: none; background: #fff; border: 1px solid #a6a6b4; text-align: left; }
.choices li { display: flex; height: 18px; line-height: 18px; padding-left: 2px; }
.choices li:nth-child(odd) { height: 19px; }
.choices li:nth-child(even) { background: #d7e4ff; }
.choices li:first-child { background: #4080ff; }
.choices span { width: 20px; }
.context { left: 39px; top: 12px; width: 300px; }

.vscroll { display: flex; flex-direction: column; padding: 20px 1px 0; align-items: stretch; background: #fafaff; }
.vscroll .arrow, .hscroll .arrow { width: 16px; height: 16px; }
.hscroll { grid-column: 2; display: flex; align-items: center; background: #fcfcff; }
.thumb { display: flex; align-items: center; justify-content: center; border: 1px solid #91a7da; border-radius: 1px; }
.thumb.v { height: 120px; background: linear-gradient(90deg, #dfe7fc, #c7d5fa 60%, #a7b8e2); }
.thumb.h { width: 435px; height: 16px; background: linear-gradient(#dfe7fc, #c7d5fa 50%, #a7b8e2); }
.grip { width: 8px; height: 8px; background: repeating-linear-gradient(#e8eefc 0 1px, #a9badf 1px 2px); }
.h .grip { background: repeating-linear-gradient(90deg, #e8eefc 0 1px, #a9badf 1px 2px); }

.right { width: 258px; flex: none; display: flex; flex-direction: column; border-left: 1px solid #808086; padding: 0 7px 8px 6px; }
.group-title { display: flex; align-items: center; gap: 3px; margin: 0; font: inherit; height: 19px; }
.group-title::before, .group-title::after { content: ""; height: 1px; background: #c6c6d2; }
.group-title::before { width: 9px; }
.group-title::after { flex: 1; }
.nav-frame { display: flex; height: 42px; flex: none; border-top: 1px solid #b2b2ba; border-left: 1px solid #b2b2ba; }
.nav-frame.tall { flex: 1; height: auto; border-top: 2px solid #a0a0a6; }
.nav-fill { flex: 1; background: #e8e8f2; }
.nav-table { flex: 1; width: 100%; table-layout: fixed; border-collapse: separate; border-spacing: 0; }
.n-col { width: 56px; }
.nav-table th, .nav-table td { padding: 0 1px; font-weight: normal; text-align: left; white-space: nowrap; }
.nav-table th { padding-left: 0; height: 20px; background: #f3f3ff; border-right: 1px solid #b8b8c2; }
.nav-table td { height: 18px; background: #4080ff; color: #fff; border-right: 1px solid #dfe6f8; line-height: 16px; }
.head { display: flex; align-items: center; }
.order { margin-left: auto; display: flex; align-items: center; gap: 1px; }
.order svg { width: 8px; height: 5px; }
.nav-side { width: 18px; flex: none; display: flex; flex-direction: column; background: #fcfcff; }
.cols { width: 17px; height: 20px; margin-left: 1px; border: 1px solid #2c4a80; border-radius: 2px; display: grid; place-items: center; background: linear-gradient(#fff, #d0d0dc); }
.cols svg { width: 11px; height: 12px; }
.ghost { flex: 1; display: flex; flex-direction: column; justify-content: space-between; align-items: center; color: #cfcfd4; padding: 1px 0; }
.tall .ghost { padding: 6px 0; }
.ghost svg { width: 9px; height: 9px; }
.pixelated { width: 30px; height: 10px; }
.radios { display: flex; align-items: center; justify-content: space-between; height: 24px; padding: 0 2px 2px 0; border-bottom: 1px solid #fff; }
.radios label { display: flex; align-items: center; gap: 4px; }
.radios input { appearance: none; width: 13px; height: 13px; border: 1px solid #1f477e; border-radius: 7px; background: linear-gradient(135deg, #dedee2, #fff 70%); display: grid; place-items: center; }
.radios input:checked::after { content: ""; width: 5px; height: 5px; border-radius: 3px; background: #21a121; }
.filters { margin: 5px 0; padding: 4px 0; border-top: 2px solid #a0a0a6; border-bottom: 1px solid #fff; display: flex; flex-direction: column; gap: 8px; }
.filter-row { position: relative; display: flex; align-items: center; height: 24px; }
.filter-row label { width: 42px; }
.push { margin-left: auto; width: 90px; height: 23px; border: 1px solid #24477f; border-radius: 3px; background: linear-gradient(#fff, #ececf6 50%, #c6c6d2); box-shadow: inset 0 0 0 1px #f4f4fa; }
.count { margin: 0; height: 19px; line-height: 17px; text-align: center; border-bottom: 1px solid #fff; }
.pager { display: flex; justify-content: center; gap: 1px; height: 24px; align-items: center; border-bottom: 2px solid #e0e0ec; }

.statusbar { display: flex; height: 19px; flex: none; margin-left: 1px; background: #d4525d; color: #fff; border: 1px solid #7e97bd; }
.statusbar span { display: flex; align-items: center; padding: 0 3px 0 2px; }
.statusbar .host { width: 36px; }
.statusbar span + span { border-left: 1px solid #7e97bd; }
.statusbar .path { flex: 1; padding-left: 1px; }
.statusbar .schoolyear { padding: 0 5px 0 7px; }
.pixelated.wide { width: 64px; height: 10px; }
```
